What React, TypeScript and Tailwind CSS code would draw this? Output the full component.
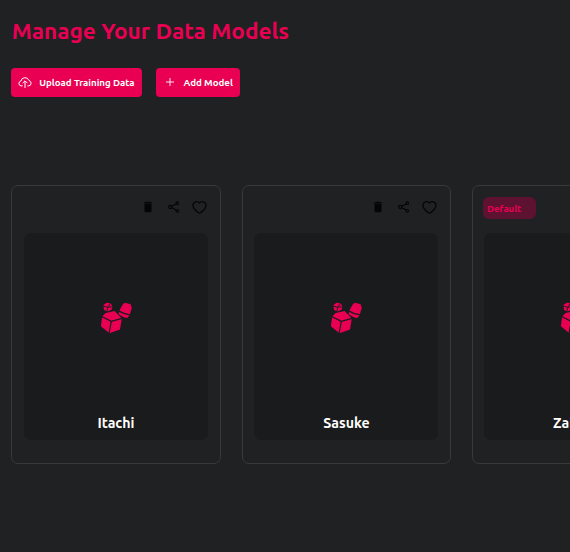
import { AiOutlineHeart } from "react-icons/ai";
import { MdDelete } from "react-icons/md";

const models = [
  { name: "Itachi", isDefault: false },
  { name: "Sasuke", isDefault: false },
  { name: "Zabuza", isDefault: true },
];

function Cubes() {
  return (
    <svg width="32" height="32" viewBox="0 0 32 32" fill="#e90052" className="shrink-0">
      <path d="M3.4 3 6.6 .8 10.8 1.2 12.4 4.4 11.6 7.8 7.6 9.6 4 8Z" />
      <path d="M2.2 14.4 5.6 11 14.6 9 21.8 16.4 20 27.4 9.4 31.2 .9 24.2Z" />
      <path d="M19.5 8.2 23 2 25 .8 30.6 2.2 31.8 5.8 29.6 13.2 27.2 16 23.6 15.2 18.7 12.2Z" />
      <g fill="none" stroke="#1a1b1c">
        <path strokeWidth=".9" d="M2.8 3.9 7.7 5.3 12.6 4.7M7.7 5.3 6.9 9.8M7.7 5.3 10.8 .8" />
        <path strokeWidth="1.2" d="M1.2 14.2 11.3 19.4 22.2 16.3M11.3 19.4 9 31.6" />
        <path strokeWidth="1.3" d="M18.6 8.8 23.8 11.4 30 12.8" />
      </g>
    </svg>
  );
}

function CloudUpload() {
  return (
    <svg width="14" height="13" viewBox="0 0 14 13" fill="none" stroke="white" strokeWidth="1" strokeLinejoin="round" className="mr-[7px] -mt-px ml-px shrink-0">
      <path d="M4.6 9.9H3A2.5 2.5 0 0 1 2.9 5A4.2 4.2 0 0 1 11 4.6A2.7 2.7 0 0 1 10.8 9.9H9.4" />
      <path d="M7 12V5M4.6 7.2 7 4.8 9.4 7.2" />
    </svg>
  );
}

function Share() {
  return (
    <svg width="12" height="12" viewBox="0 0 12 12" fill="none" stroke="#050506" strokeWidth="1.1">
      <circle cx="2.3" cy="6" r="1.6" />
      <circle cx="9.3" cy="2.2" r="1.3" />
      <circle cx="9.3" cy="9.8" r="1.3" />
      <path d="M3.7 5.2 8.1 2.9M3.7 6.8 8.1 9.1" />
    </svg>
  );
}

function Card({ name, isDefault }: { name: string; isDefault: boolean }) {
  return (
    <article className="flex h-[279px] w-[209.4px] shrink-0 flex-col rounded-[7px] border border-[#38393b] pt-[11px] pr-[11.8px] pl-[11.4px]">
      <div className="flex h-[36px] items-start">
        {isDefault && (
          <span className="-ml-[1.4px] flex h-[22px] w-[53px] items-center rounded-[6px] bg-[#5c1230] pt-[2px] pl-1 text-[9.6px] font-semibold text-[#e90052]">
            Default
          </span>
        )}
        <div className="ml-auto flex h-[20px] items-center text-[#050506]">
          <MdDelete size={14} className="mr-[13px]" />
          <Share />
          <AiOutlineHeart size={17} className="ml-[11px]" />
        </div>
      </div>
      <div className="flex h-[207px] flex-col items-center rounded-[7px] bg-[#1a1b1c] pt-[69px]">
        <Cubes />
        <h2 className="mt-[77px] pl-[0.7px] text-[14.2px] leading-6 font-bold text-white">{name}</h2>
      </div>
    </article>
  );
}

export default function App() {
  return (
    <main className="h-[552px] w-full overflow-hidden bg-[#202123] pl-[11.2px] font-['Ubuntu','Noto_Sans',sans-serif]">
      <h1 className="pt-4 pl-[0.5px] text-[22.6px] leading-[30px] font-bold whitespace-nowrap text-[#e90052]">
        Manage Your Data Models
      </h1>
      <div className="mt-[22px] flex gap-[14px] text-[9.7px] font-semibold whitespace-nowrap text-white">
        <button className="flex h-[29px] w-[131px] items-center rounded-[4px] bg-[#e90052] pl-[6px]">
          <CloudUpload />
          <span className="pt-px">Upload Training Data</span>
        </button>
        <button className="flex h-[29px] w-[84px] items-center rounded-[4px] bg-[#e90052] pl-[10px]">
          <svg width="8" height="8" viewBox="0 0 8 8" stroke="white" strokeWidth=".9" className="mr-[9.3px] -mt-px shrink-0">
            <path d="M4 0V8M0 4H8" />
          </svg>
          <span className="pt-px">Add Model</span>
        </button>
      </div>
      <section className="mt-[88px] flex gap-[21px]">
        {models.map((model) => (
          <Card key={model.name} {...model} />
        ))}
      </section>
    </main>
  );
}
